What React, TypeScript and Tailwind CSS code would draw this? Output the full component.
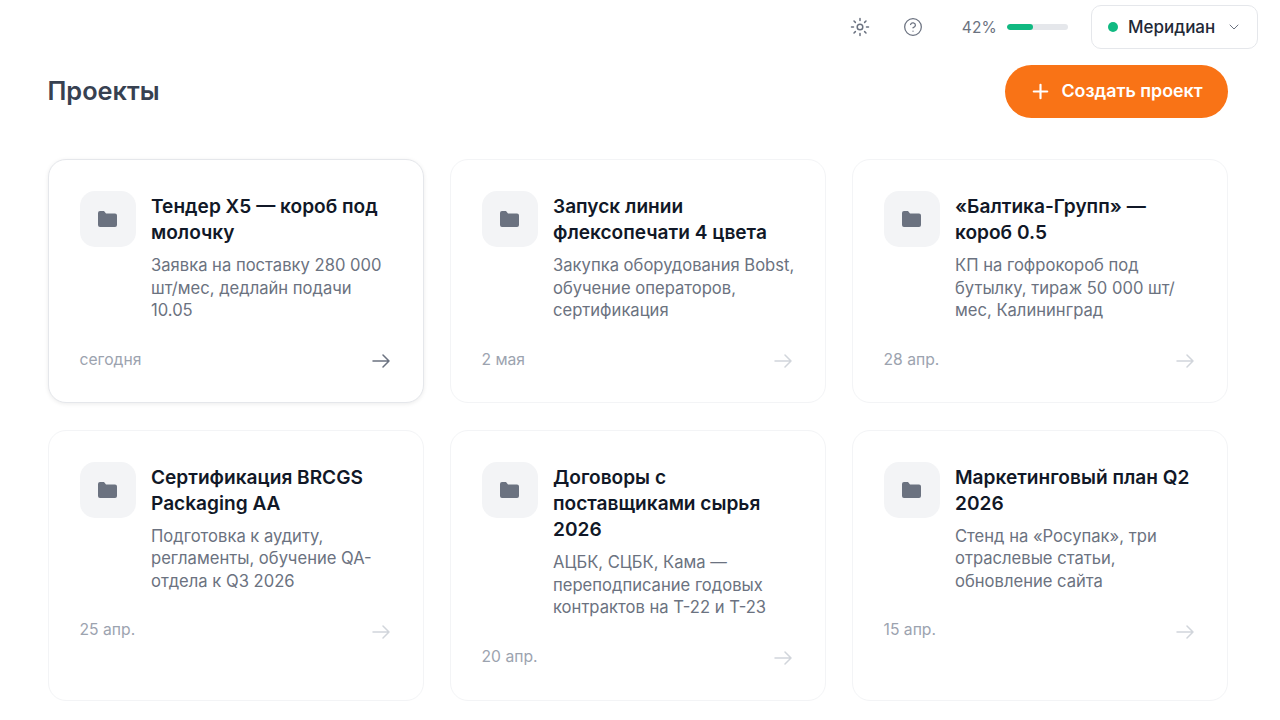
import React from "react";
import { CircleHelp, ChevronDown, Plus } from "lucide-react";

const projects = [
  { t: "Тендер X5 — короб под молочку", d: "Заявка на поставку 280 000 шт/мес, дедлайн подачи 10.05", w: "сегодня", active: true },
  { t: "Запуск линии флексопечати 4 цвета", d: "Закупка оборудования Bobst, обучение операторов, сертификация", w: "2 мая" },
  { t: "«Балтика-Групп» — короб 0.5", d: "КП на гофрокороб под бутылку, тираж 50 000 шт/мес, Калининград", w: "28 апр." },
  { t: "Сертификация BRCGS Packaging AA", d: "Подготовка к аудиту, регламенты, обучение QA-отдела к Q3 2026", w: "25 апр." },
  { t: "Договоры с поставщиками сырья 2026", d: "АЦБК, СЦБК, Кама — переподписание годовых контрактов на Т-22 и Т-23", w: "20 апр." },
  { t: "Маркетинговый план Q2 2026", d: "Стенд на «Росупак», три отраслевые статьи, обновление сайта", w: "15 апр." },
];

function Card({ p }: { p: (typeof projects)[number] }) {
  return (
    <div
      className={
        "flex flex-col rounded-[18px] border bg-white px-[31px] pt-[31px] pb-[28px] " +
        (p.active ? "border-[#e5e7eb] shadow-[0_1px_4px_rgba(0,0,0,0.08)]" : "border-[#f3f4f6]")
      }
    >
      <div className="flex gap-[15.5px]">
        <div className="flex h-[56px] w-[56px] shrink-0 items-center justify-center rounded-[15px] bg-[#f3f4f6]">
          <svg width="19" height="16" viewBox="0 0 19 16" fill="#6b7280">
            <path d="M0 2a2 2 0 0 1 2-2h4l2 2.500h9a2 2 0 0 1 2 2V14a2 2 0 0 1-2 2H2a2 2 0 0 1-2-2z" />
          </svg>
        </div>
        <div className="min-w-0 flex-1">
          <div className="mt-[2px] text-[19.100px] leading-[26.400px] font-semibold text-[#111827]">{p.t}</div>
          <div className="mt-[8.300px] -mr-[3px] text-[16.600px] leading-[22.500px] text-[#6b7280]">{p.d}</div>
        </div>
      </div>
      <div className="mt-[27.200px] flex items-center justify-between">
        <span className="text-[15.700px] leading-[22px] text-[#9ca3af]">{p.w}</span>
        <svg
          width="18"
          height="14"
          viewBox="0 0 18 14"
          fill="none"
          stroke="currentColor"
          strokeWidth="1.500"
          strokeLinecap="round"
          strokeLinejoin="round"
          className={"relative top-[1.500px] mr-[2px] " + (p.active ? "text-[#6b7280]" : "text-[#d1d5db]")}
        >
          <path d="M1 7h16M11 1l6 6-6 6" />
        </svg>
      </div>
    </div>
  );
}

function SunIcon() {
  return (
    <svg width="22" height="22" viewBox="0 0 22 22" fill="none" stroke="#6b7280" strokeWidth="1.500" strokeLinecap="round">
      <circle cx="11" cy="11" r="2.800" />
      <path d="M11 2.500v2M11 17.500v2M2.500 11h2M17.500 11h2M5 5l1.400 1.400M15.600 15.600L17 17M5 17l1.400-1.400M15.600 6.400L17 5" />
    </svg>
  );
}

export default function App() {
  return (
    <div className="h-[720px] w-[1280px] overflow-hidden bg-white font-['Inter',sans-serif]">
      <header className="flex h-[54px] items-center justify-end pr-[22px]">
        <SunIcon />
        <CircleHelp size={20} strokeWidth={1.5} className="ml-[32px] text-[#6b7280]" />
        <span className="mt-px ml-[39px] text-[15.500px] tracking-[0.2px] text-[#6b7280]">42%</span>
        <div className="ml-[10px] h-[6px] w-[61px] overflow-hidden rounded-full bg-[#e5e7eb]">
          <div className="h-full w-[42%] rounded-full bg-[#10b981]" />
        </div>
        <div className="ml-[23px] flex h-[44px] w-[167px] items-center rounded-[10px] border border-[#e5e7eb] bg-white pl-[16px]">
          <span className="h-[10px] w-[10px] rounded-full bg-[#10b981]" />
          <span className="mt-px ml-[10px] text-[17px] font-medium text-[#1f2937]">Меридиан</span>
          <ChevronDown size={16} strokeWidth={1.5} className="ml-[11px] text-[#6b7280]" />
        </div>
      </header>
      <main className="pr-[52.500px] pl-[47.500px] pt-[11px]">
        <div className="flex h-[53px] items-center justify-between">
          <h1 className="-mt-px text-[25.300px] font-semibold text-[#374151]">Проекты</h1>
          <button className="flex h-[53px] w-[223px] items-center justify-center rounded-full bg-[#f97316] text-white">
            <Plus size={23} strokeWidth={2.25} />
            <span className="ml-[9px] text-[17.850px] font-semibold">Создать проект</span>
          </button>
        </div>
        <div className="mt-[41px] grid grid-cols-3 grid-rows-[244px_271.500px] gap-x-[26px] gap-y-[26.500px]">
          {projects.map((p) => (
            <Card key={p.t} p={p} />
          ))}
        </div>
      </main>
    </div>
  );
}
